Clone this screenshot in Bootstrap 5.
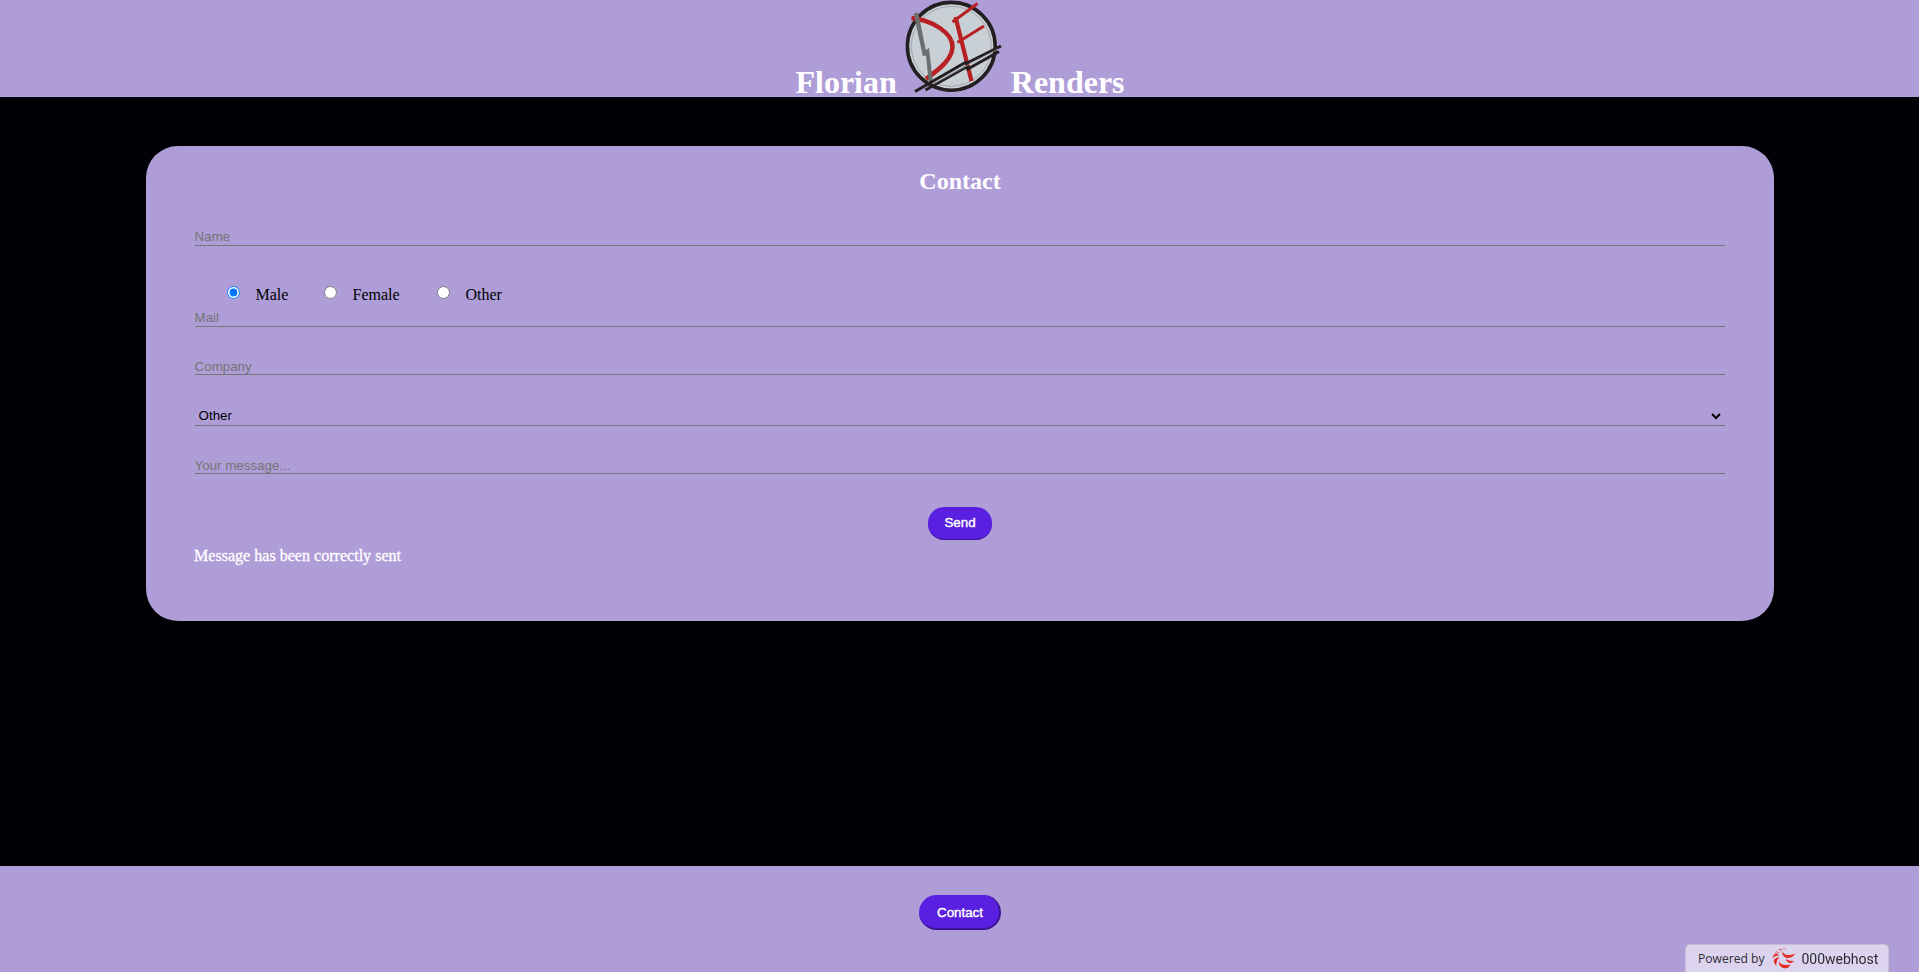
<!DOCTYPE html>
<html lang="en">
<head>
<meta charset="utf-8">
<title>Florian Renders - Contact</title>
<link rel="stylesheet" href="https://cdn.jsdelivr.net/npm/bootstrap@5.3.0/dist/css/bootstrap.min.css">
<style>
:root{--lilac:#af9dd8;--violet:#5a1fe0}
body{background:#000005;color:#000;font-family:"Liberation Serif",serif;font-size:16px;line-height:18px}
.site-head{background:var(--lilac);height:97px;padding-left:1px}
.site-head h1{font-size:32px;line-height:29px;font-weight:700}
.brand-mark{width:98px;height:97px;margin:0 8px}
.panel{background:var(--lilac);border-radius:32px;margin:49px 145px 0 146px;padding:21px 49px 0;height:475px}
.panel h2{font-size:24px;line-height:28px;font-weight:700}
.line-field{display:block;width:100%;height:17px;border:0;border-bottom:1px solid #767676;background:transparent;padding:0 0 1px;font:13.333px/15px "Liberation Sans",Arial,sans-serif;border-radius:0;outline:0;resize:none;overflow:hidden;color:#000;text-indent:-.4px}
.line-field.tight{height:16px;padding:0}
.line-field::placeholder{color:#757575;opacity:1}
select.line-field{height:20px;padding:1px 0 2px 4px;appearance:none}
.caret-down{right:4px;top:6px}
.choice{height:18px}
.choice input{width:13px;height:13px;margin:2px 15.500px 0 0}
.choice span{margin-top:2px}
.pill{background:var(--violet);color:#fff;font:13.333px/15px "Liberation Sans",Arial,sans-serif;border:0;-webkit-text-stroke:.4px #fff}
.pill-send{width:64px;height:33px;border-radius:16px;border-bottom:1px solid #3c1594;padding:0 0 2px}
.pill-contact{width:82px;height:35px;border-radius:18px;border:solid #3c1594;border-width:0 2px 2px 0;padding:2px 0 0 3px}
.sent-note{margin:7px 0 0 -1px;-webkit-text-stroke:.3px #fff;letter-spacing:.03px}
.site-foot{background:var(--lilac);height:106px;padding-top:29px}
.host-tag{right:30px;bottom:0;width:204px;height:28px;background:#dcd3ee;border:1px solid #c5c0ce;border-bottom:0;border-radius:5px 5px 0 0;color:#2d2d33;font:12.1px/27px "Open Sans",sans-serif;padding-left:12px}
.host-name{font:14px/28px Roboto,"Open Sans",sans-serif}
</style>
</head>
<body class="vh-100 d-flex flex-column overflow-hidden">
<header class="site-head d-flex justify-content-center flex-shrink-0">
  <h1 class="m-0 d-flex align-items-end text-white"><span>Florian</span>
    <svg class="brand-mark" viewBox="905 0 98 97" fill="none">
      <circle cx="951.3" cy="46.3" r="43.900" fill="#c9d0d5" stroke="#231f20" stroke-width="3.6"/>
      <circle cx="951.3" cy="46.300" r="40" stroke="#969ba0" stroke-width=".8"/>
      <path d="M911.5 18C932 20 953 33 952.5 47C952 59 941 68 926 79" stroke="#b92024" stroke-width="4.5"/>
      <path d="M955.5 17L971.5 81" stroke="#b92024" stroke-width="4.3"/>
      <path d="M952.5 22L977.5 3.5M957.5 42.5L984 26" stroke="#b92024" stroke-width="3"/>
      <path d="M913.700 13.500L918.2 12.500L925.8 50L929 48L933 83H928.8L926 55.500L922.800 56Z" fill="#6d6e70"/>
      <path d="M915 91.5L967 61.5M925.500 90L969 65.500M965 64L1001 46M966.500 69.800L999 51.500" stroke="#231f20" stroke-width="3"/>
      <path d="M934 83.500L998 49" stroke="#a8abad" stroke-width=".7"/>
    </svg>
    <span>Renders</span></h1>
</header>
<main class="flex-grow-1">
  <form class="panel" onsubmit="return false">
    <h2 class="text-center text-white m-0">Contact</h2>
    <input class="line-field" style="margin-top:34px" placeholder="Name">
    <div class="d-flex" style="margin-top:38px;padding-left:32px">
      <label class="choice d-flex align-items-start" style="width:97px"><input type="radio" name="g" checked><span>Male</span></label>
      <label class="choice d-flex align-items-start" style="width:113px"><input type="radio" name="g"><span>Female</span></label>
      <label class="choice d-flex align-items-start"><input type="radio" name="g"><span>Other</span></label>
    </div>
    <input class="line-field" style="margin-top:8px" placeholder="Mail">
    <input class="line-field tight" style="margin-top:32px" placeholder="Company">
    <div class="position-relative" style="margin-top:31px">
      <select class="line-field"><option>Other</option></select>
      <svg class="caret-down position-absolute" width="10" height="8" viewBox="0 0 10 8"><path d="M1 2L5 6L9 2" fill="none" stroke="#000" stroke-width="2"/></svg>
    </div>
    <textarea class="line-field tight" style="margin-top:32px" rows="1" placeholder="Your message..."></textarea>
    <div class="d-flex justify-content-center" style="margin-top:33px"><button class="pill pill-send">Send</button></div>
    <p class="sent-note text-white">Message has been correctly sent</p>
  </form>
</main>
<footer class="site-foot d-flex justify-content-center align-items-start flex-shrink-0">
  <button class="pill pill-contact">Contact</button>
</footer>
<div class="host-tag position-fixed d-flex">
  <span>Powered by</span>
  <svg width="24" height="21" viewBox="1771 948 24 21" style="margin:3px 5px 0 8px" fill="#e12d27">
    <path d="M1794.500 953.500Q1790 959.500 1784.500 957.500Q1781 956 1781.500 951.500Q1783.500 955 1787 955Q1791 955 1794.500 953.500Z"/>
    <path d="M1785 959Q1788.500 961.500 1793 961Q1790.500 964 1787.500 962.500Q1785 961.500 1785 959Z"/>
    <path d="M1778 961.500Q1781 966.500 1789.500 964.500Q1787 969.500 1782 968Q1777.500 966 1778 961.500Z"/>
    <path d="M1778.500 957.500Q1774.500 961 1775.500 966Q1771.500 962 1773.500 959Q1775.500 957 1778.500 957.500Z"/>
    <path d="M1778 955.500Q1774 955 1771.500 958.500Q1772.500 953.500 1775.500 953.500Q1777.500 954 1778 955.500Z"/>
    <path d="M1779 953.500Q1776 951.500 1773 952.500Q1776.500 950 1779 953.500ZM1781 951.500Q1779.500 949.500 1777 949.500Q1780.500 948 1781 951.500ZM1785 950Q1783 948 1781 948.800Q1784 947 1785 950Z"/>
  </svg>
  <span class="host-name">000webhost</span>
</div>
<script src="https://cdn.jsdelivr.net/npm/bootstrap@5.3.0/dist/js/bootstrap.bundle.min.js"></script>
</body>
</html>
